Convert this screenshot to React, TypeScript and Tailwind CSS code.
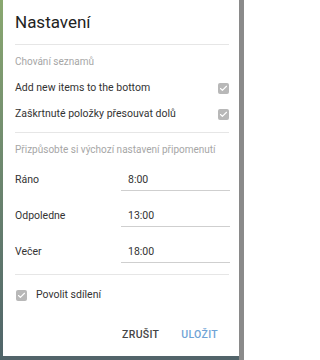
import { Check } from "lucide-react"

function Box() {
    return (
        <span className="flex items-center justify-center w-[11px] h-[11px] rounded-[2px] bg-[#b8b8b8]">
            <Check size={9} strokeWidth={3} className="text-white" />
        </span>
    )
}

export default function App() {
    const times = [
        { label: "Ráno", value: "8:00" },
        { label: "Odpoledne", value: "13:00" },
        { label: "Večer", value: "18:00" },
    ]

    return (
        <div className="w-[244px] h-[360px] bg-[#52646a] flex font-['Roboto',sans-serif]">
            <div className="w-[3px] h-full bg-gradient-to-b from-[#8aa870] to-[#4f6469]" />
            <div className="w-[236px] h-[356px] bg-white flex flex-col pl-[12px] pr-[10px] text-[#333]">
                {/* HEADER */}
                <div className="h-[45px] pt-[11px] border-b border-[#e6e6e6]">
                    <span className="text-[17px] leading-[21px] text-[#222]">Nastavení</span>
                </div>

                {/* SEZNAM */}
                <div className="flex flex-col pb-[11px] border-b border-[#e6e6e6]">
                    <span className="text-[10px] text-[#a6a6a6] mt-[10px] leading-[14px]">Chování seznamů</span>
                    <div className="flex items-center justify-between mt-[12px] h-[14px]">
                        <span className="text-[10.5px]">Add new items to the bottom</span>
                        <Box />
                    </div>
                    <div className="flex items-center justify-between mt-[12px] h-[14px]">
                        <span className="text-[10.5px]">Zaškrtnuté položky přesouvat dolů</span>
                        <Box />
                    </div>
                </div>

                {/* PRIPOMENUTI */}
                <div className="flex flex-col pb-[11px] border-b border-[#e6e6e6]">
                    <span className="text-[10px] text-[#a6a6a6] mt-[10px] leading-[14px] whitespace-nowrap">
                        Přizpůsobte si výchozí nastavení připomenutí
                    </span>
                    <div className="flex flex-col gap-[14px] mt-[12px]">
                        {times.map((t) => (
                            <div key={t.label} className="flex items-start h-[22px]">
                                <span className="text-[10.5px] leading-[14px] w-[106px] pt-[4px]">{t.label}</span>
                                <span className="flex-1 text-[10.5px] leading-[14px] pl-[7px] pt-[4px] h-[22px] border-b border-[#cfcfcf] -mr-[1px]">
                                    {t.value}
                                </span>
                            </div>
                        ))}
                    </div>
                </div>

                <div className="flex items-center gap-[9px] mt-[13px] h-[14px] pl-[1px]">
                    <Box />
                    <span className="text-[10.5px]">Povolit sdílení</span>
                </div>

                <div className="flex justify-end items-center gap-[22px] mt-[26px] h-[14px] pr-[11px] text-[10.5px] font-medium tracking-[0.3px]">
                    <span className="text-[#444]">ZRUŠIT</span>
                    <span className="text-[#6fa3d6]">ULOŽIT</span>
                </div>
            </div>
            <div className="flex-1 bg-[#8a8a8a] h-full" />
        </div>
    )
}
